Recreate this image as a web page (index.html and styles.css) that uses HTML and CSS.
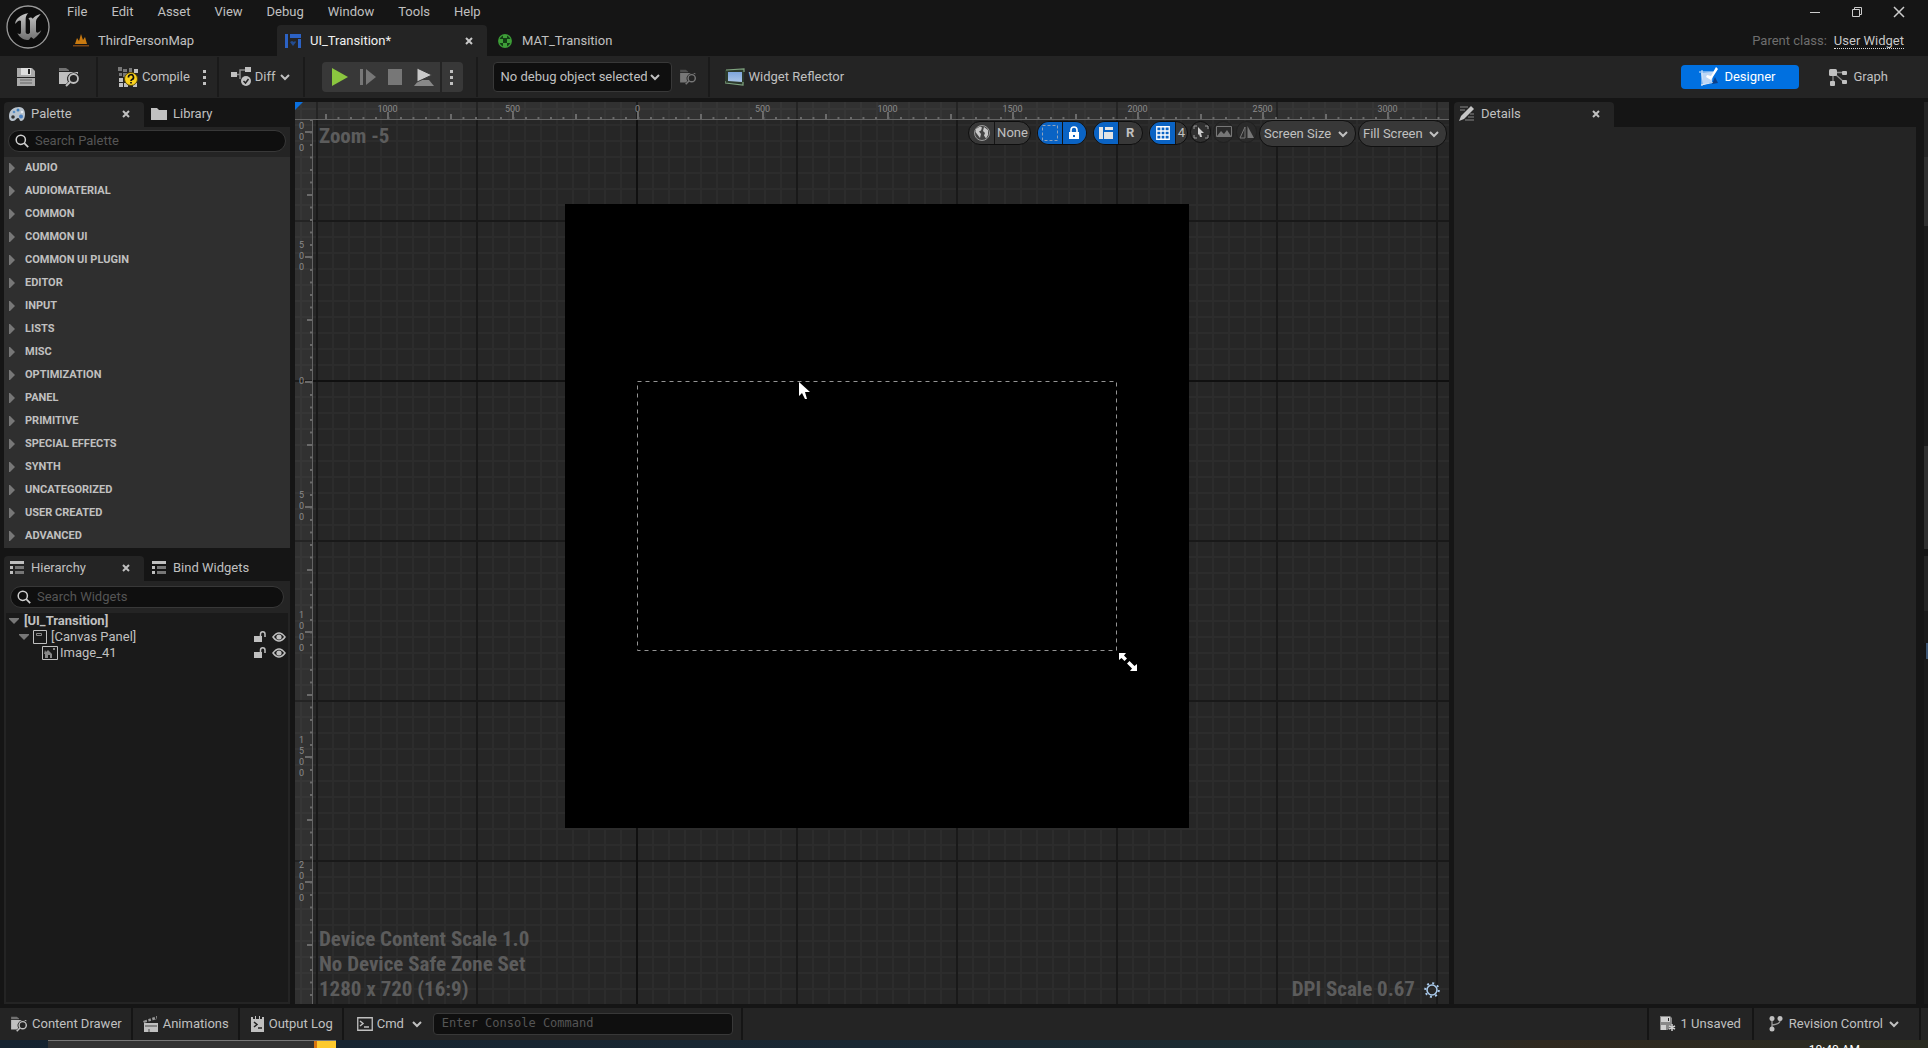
FILE: index.html
```html
<!DOCTYPE html>
<html lang="en">
<head>
<meta charset="utf-8">
<title>UI_Transition</title>
<link rel="stylesheet" href="styles.css">
</head>
<body>
<svg class="defs" aria-hidden="true">
  <defs>
    <linearGradient id="metal" x1="0" y1="0" x2="0" y2="1"><stop offset="0" stop-color="#c4c4c4"/><stop offset="1" stop-color="#6f6f6f"/></linearGradient>
    <linearGradient id="screen" x1="0" y1="0" x2="0" y2="1"><stop offset="0" stop-color="#7fa6dc"/><stop offset="1" stop-color="#a9c4e6"/></linearGradient>
  </defs>
  <symbol id="i-chevron" viewBox="0 0 10 8"><path d="M1 2l4 4 4-4" fill="none" stroke="currentColor" stroke-width="2"/></symbol>
  <symbol id="i-close" viewBox="0 0 8 8"><path d="M1 1l6 6M7 1L1 7" stroke="currentColor" stroke-width="2"/></symbol>
  <symbol id="i-search" viewBox="0 0 14 14"><circle cx="5.8" cy="5.8" r="4.6" fill="none" stroke="currentColor" stroke-width="1.5"/><path d="M9.2 9.2l4 4" stroke="currentColor" stroke-width="1.7"/></symbol>
  <symbol id="i-browse" viewBox="0 0 21 20"><path d="M0 1h7l3 2v1H0z" fill="currentColor" opacity=".5"/><path d="M0 5h19v2a6.500 6.500 0 0 0-10 8l-2 2H0z" fill="currentColor"/><circle cx="14.500" cy="11.500" r="4.500" fill="none" stroke="currentColor" stroke-width="1.800"/><path d="M11 15l-4 4" stroke="currentColor" stroke-width="2"/></symbol>
  <symbol id="i-dots" viewBox="0 0 4 16"><path d="M0 1h3v3H0zM0 7h3v3H0zM0 13h3v3H0z" fill="currentColor"/></symbol>
  <symbol id="i-list" viewBox="0 0 14 14"><path d="M0 0h14v3H0zM0 5h3v3H0zM0 10h3v3H0z" fill="currentColor"/><path d="M5 5h9v3H5zM5 10h9v3H5z" fill="#777"/></symbol>
  <symbol id="i-unlock" viewBox="0 0 12 11"><path d="M0 5h8v6H0z" fill="currentColor"/><path d="M6.500 5V3a2.200 2.200 0 0 1 4.500 0v3" fill="none" stroke="currentColor" stroke-width="1.500"/></symbol>
  <symbol id="i-eye" viewBox="0 0 14 10"><path d="M1 5Q7-3 13 5Q7 13 1 5z" fill="none" stroke="currentColor" stroke-width="1.500"/><circle cx="7" cy="5" r="2.600" fill="currentColor"/></symbol>
  <symbol id="i-right" viewBox="0 0 6 10"><path d="M0 0h1l5 5-5 5H0z" fill="currentColor"/></symbol>
  <symbol id="i-down" viewBox="0 0 10 6"><path d="M0 0h10v1L5 6 0 1z" fill="currentColor"/></symbol>
</svg>

<header class="titlebar">
  <svg class="logo" viewBox="0 0 132 132" aria-label="Unreal Engine"><circle cx="66" cy="66" r="63" fill="#0d0d0d" stroke="#9a9a9a" stroke-width="4"/><path transform="translate(-17 -17)" fill="url(#metal)" d="M84 42C60 45 43 62 45 74C50 66 60 60 62 66L62 98C62 106 57 105 51 102C60 118 76 125 86 121L92 113L100 119C112 110 119 102 123 92C115 101 108 103 107 96L107 66C107 58 115 52 121 44C112 46 101 52 97 58C94 53 88 54 84 58C88 60 89 62 89 68L89 100C84 107 76 104 76 98L76 60C76 52 79 46 84 42Z"/></svg>
  <div class="titlemain">
    <div class="menurow">
      <nav class="menu">
        <button>File</button><button>Edit</button><button>Asset</button><button>View</button><button>Debug</button><button>Window</button><button>Tools</button><button>Help</button>
      </nav>
      <div class="winctl">
        <button aria-label="Minimize"><svg width="12" height="12"><path d="M1 6.500h10" stroke="#ccc"/></svg></button>
        <button aria-label="Restore"><svg width="12" height="12"><path d="M1.500 3.500h7v7h-7zM3.500 3V1.500h7v7H9" fill="none" stroke="#ccc"/></svg></button>
        <button aria-label="Close"><svg width="12" height="12"><path d="M1 1l10 10M11 1L1 11" stroke="#ccc" stroke-width="1.500"/></svg></button>
      </div>
    </div>
    <div class="tabrow">
      <div class="doctab first"><svg width="16" height="14" viewBox="0 0 16 14"><path d="M2 10l2-6 2 3 2-7 2 6 2-3 2 7z" fill="#c97a10"/><path d="M0 11h16v1.500H0z" fill="#7a4515"/></svg><span>ThirdPersonMap</span></div>
      <div class="doctab active"><svg width="16" height="14" viewBox="0 0 16 14"><path d="M0 0h3v14H0zM5 0h11v4H5zM13 5h3v9h-3z" fill="#2c62c4"/><path d="M5 8l2-1 2 1 1-1 1 1-3 4z" fill="#234c90"/></svg><span>UI_Transition*</span><button aria-label="Close tab"><svg width="8" height="8"><use href="#i-close"/></svg></button></div>
      <div class="doctab wide"><svg width="16" height="14" viewBox="-1 0 16 14"><circle cx="7" cy="7" r="6.300" fill="#123c14" stroke="#3b9c36" stroke-width="1.300"/><path d="M5 1h4v3H5zM1 5h4v4H1zM9 5h4v4H9zM5 9h4v4H5z" fill="#3f9e38"/></svg><span>MAT_Transition</span></div>
      <div class="parent"><span>Parent class:</span><a href="#">User Widget</a></div>
    </div>
  </div>
</header>

<div class="toolbar">
  <div class="group files">
    <button aria-label="Save"><svg width="18" height="18" viewBox="0 0 18 18"><path d="M0 0h15l3 3v15H0z" fill="#aaa"/><path d="M4 0h10v7H4z" fill="#ddd"/><path d="M11 1h2v5h-2zM0 9h18v1H0z" fill="#222"/><path d="M3 12h12M3 15h12" stroke="#666"/></svg></button>
    <button aria-label="Browse"><svg width="21" height="20"><use href="#i-browse"/></svg></button>
  </div>
  <div class="group compile">
    <button class="label"><svg width="20" height="20" viewBox="0 0 20 20"><path d="M0 0h4v4H0zM5 2h4v3H5zM11 1h3v4h-3zM1 6h3v3H1zM5 6h5v4H5z" fill="#777"/><path d="M16 2h4v4h-4zM1 11h4v4H1zM1 16h4v4H1zM6 16h4v4H6zM15 16h4v4h-4z" fill="#c0c0c0"/><circle cx="13" cy="12" r="6.500" fill="#fbd21c" stroke="#5a4a08"/><path d="M10.500 10.500a2.500 2.500 0 1 1 3.500 2q-1 .5-1 1.500M13 15v1.500" fill="none" stroke="#111" stroke-width="1.700"/></svg>Compile</button>
    <button aria-label="Compile options"><svg width="4" height="16"><use href="#i-dots"/></svg></button>
  </div>
  <div class="group diff">
    <button class="label"><svg width="20" height="20" viewBox="0 0 20 20"><path d="M0 5h6v5H0zM14 0h6v5h-6z" fill="#c0c0c0"/><path d="M6 7.500h3V3h5M9 7v5" fill="none" stroke="#888" stroke-width="1.500"/><circle cx="15" cy="14" r="5" fill="#c0c0c0"/><path d="M12.500 14l2 2 3-4" fill="none" stroke="#222" stroke-width="1.500"/></svg>Diff<svg width="10" height="8"><use href="#i-chevron"/></svg></button>
  </div>
  <div class="group play">
    <div class="playbox">
      <button aria-label="Play"><svg width="18" height="18" viewBox="0 0 18 18"><path d="M1 0l16 9L1 18z" fill="#8bc63f"/></svg></button>
      <button aria-label="Skip"><svg width="16" height="18" viewBox="0 0 16 18"><path d="M0 1h3v16H0zM6 1l10 8-10 8z" fill="#777"/></svg></button>
      <button aria-label="Stop"><svg width="16" height="18" viewBox="0 0 16 18"><path d="M1 1h14v16H1z" fill="#777"/></svg></button>
      <button aria-label="Eject"><svg width="20" height="18" viewBox="0 0 20 18"><path d="M0 18l5-6h10l5 6z" fill="#888"/><path d="M3 0l15 7L3 14z" fill="#c8c8c8" stroke="#383838"/></svg></button>
      <button class="more" aria-label="Play options"><svg width="4" height="16"><use href="#i-dots"/></svg></button>
    </div>
  </div>
  <div class="group debug">
    <span class="drop dark"><select aria-label="Debug object"><option>No debug object selected</option></select><svg width="10" height="8"><use href="#i-chevron"/></svg></span>
    <button class="dim" aria-label="Find debug object"><svg width="17" height="16"><use href="#i-browse"/></svg></button>
  </div>
  <div class="group reflect">
    <button class="label"><svg width="20" height="18" viewBox="0 0 20 18"><path d="M0 2L19 1v15L0 15z" fill="#2c3a2c"/><path d="M3 4h14v10L3 13z" fill="url(#screen)"/><path d="M1 2l18-1v3M0 13v2l18 2v-3" fill="none" stroke="#7fa37f" stroke-width="1.200"/></svg>Widget Reflector</button>
  </div>
  <div class="modes">
    <button class="mode on"><svg width="20" height="20" viewBox="0 0 20 20"><path d="M2 6l12-1-1 10-9 3z" fill="#bcd6f5"/><path d="M0 5h16M3 3v16M2 18l14-3" stroke="#dce9fa" fill="none"/><path d="M17 0l2 2-7 11-5-3 1-2 4 1z" fill="#fff"/><path d="M16 10l3 6-6 1z" fill="#0a3f8a"/></svg>Designer</button>
    <button class="mode"><svg width="19" height="17" viewBox="0 0 19 17"><path d="M5 3.500h9M7 6l8 7M4 7v7" stroke="#888" stroke-width="1.300"/><rect width="8" height="7" rx="1.500" fill="#c0c0c0"/><rect x="13" y="2" width="5" height="4" rx="1" fill="#c0c0c0"/><rect x="13" y="11" width="5" height="4" rx="1" fill="#c0c0c0"/><rect x="1" y="12" width="5" height="5" rx="1" fill="#c0c0c0"/></svg>Graph</button>
  </div>
</div>

<main class="work">
  <aside class="left">
    <section class="palette">
      <div class="ptabs">
        <div class="ptab active"><svg width="16" height="14" viewBox="0 0 16 14"><path d="M0 9C0 3 5 0 10 0s6 4 6 7-1 7-4 7c-2 0-1-3-3-3s-2 3-5 3S0 12 0 9z" fill="#b9c3cd"/><circle cx="4" cy="10" r="1.800" fill="#333"/><circle cx="5" cy="5" r="1.300" fill="#5b8fc4"/><circle cx="9" cy="3" r="1.500" fill="#3c7fc0"/><circle cx="13" cy="5" r="1.300" fill="#e8eef5"/><circle cx="12" cy="9.500" r="2" fill="#4a7fc0"/></svg><span>Palette</span><button aria-label="Close Palette"><svg width="8" height="8"><use href="#i-close"/></svg></button></div>
        <div class="ptab"><svg width="16" height="12" viewBox="0 0 16 12"><path d="M0 0h6l2 2h8v10H0z" fill="#c0c0c0"/></svg><span>Library</span></div>
      </div>
      <label class="search"><svg width="14" height="14"><use href="#i-search"/></svg><input type="text" placeholder="Search Palette" aria-label="Search Palette"></label>
      <ul class="cats">
        <li><svg width="6" height="10"><use href="#i-right"/></svg>AUDIO</li>
        <li><svg width="6" height="10"><use href="#i-right"/></svg>AUDIOMATERIAL</li>
        <li><svg width="6" height="10"><use href="#i-right"/></svg>COMMON</li>
        <li><svg width="6" height="10"><use href="#i-right"/></svg>COMMON UI</li>
        <li><svg width="6" height="10"><use href="#i-right"/></svg>COMMON UI PLUGIN</li>
        <li><svg width="6" height="10"><use href="#i-right"/></svg>EDITOR</li>
        <li><svg width="6" height="10"><use href="#i-right"/></svg>INPUT</li>
        <li><svg width="6" height="10"><use href="#i-right"/></svg>LISTS</li>
        <li><svg width="6" height="10"><use href="#i-right"/></svg>MISC</li>
        <li><svg width="6" height="10"><use href="#i-right"/></svg>OPTIMIZATION</li>
        <li><svg width="6" height="10"><use href="#i-right"/></svg>PANEL</li>
        <li><svg width="6" height="10"><use href="#i-right"/></svg>PRIMITIVE</li>
        <li><svg width="6" height="10"><use href="#i-right"/></svg>SPECIAL EFFECTS</li>
        <li><svg width="6" height="10"><use href="#i-right"/></svg>SYNTH</li>
        <li><svg width="6" height="10"><use href="#i-right"/></svg>UNCATEGORIZED</li>
        <li><svg width="6" height="10"><use href="#i-right"/></svg>USER CREATED</li>
        <li><svg width="6" height="10"><use href="#i-right"/></svg>ADVANCED</li>
      </ul>
    </section>
    <section class="hierarchy">
      <div class="ptabs">
        <div class="ptab active"><svg width="16" height="14" viewBox="-1 0 16 14"><use href="#i-list" width="14" height="14"/></svg><span>Hierarchy</span><button aria-label="Close Hierarchy"><svg width="8" height="8"><use href="#i-close"/></svg></button></div>
        <div class="ptab"><svg width="16" height="14" viewBox="-1 0 16 14"><use href="#i-list" width="14" height="14"/></svg><span>Bind Widgets</span></div>
      </div>
      <label class="search inset"><svg width="14" height="14"><use href="#i-search"/></svg><input type="text" placeholder="Search Widgets" aria-label="Search Widgets"></label>
      <ul class="tree">
        <li class="root"><svg width="10" height="6"><use href="#i-down"/></svg><b>[UI_Transition]</b></li>
        <li class="child"><svg width="10" height="6"><use href="#i-down"/></svg><svg width="14" height="14"><path d="M.5.5h13v13H.5z" fill="none" stroke="#c0c0c0"/><path d="M3.500 3.500h5v2h-5z" fill="none" stroke="#888"/></svg><span>[Canvas Panel]</span><button aria-label="Lock"><svg width="12" height="11"><use href="#i-unlock"/></svg></button><button aria-label="Visibility"><svg width="14" height="10"><use href="#i-eye"/></svg></button></li>
        <li class="leaf"><svg width="16" height="14"><path d="M.5.5h15v13H.5z" fill="none" stroke="#c0c0c0"/><path d="M2 8l1-4 1 2 2-2 4 4v4H8V9H6v3H3V8zM11 2h2v2h-2z" fill="#888"/></svg><span>Image_41</span><button aria-label="Lock"><svg width="12" height="11"><use href="#i-unlock"/></svg></button><button aria-label="Visibility"><svg width="14" height="10"><use href="#i-eye"/></svg></button></li>
      </ul>
    </section>
  </aside>

  <section class="viewport">
    <div class="artboard"></div>
    <svg class="safe" width="480" height="270"><path d="M.5.5h479v269H.5z" fill="none" stroke="#949494" stroke-dasharray="4 4"/></svg>
    <svg class="pointer" width="12" height="18"><path d="M0 0v14l3-3 3 6h2L6 10h5z" fill="#fff"/></svg>
    <svg class="sizer" width="18" height="18"><path d="M0 0h7L5 2.500l3 3-2.500 2.500-3-3L0 7zM18 18h-7l2-2.500-5-5 2.500-2.500 5 5L18 11z" fill="#fff"/><path d="M6.500 10.500l4-4" stroke="#000"/></svg>

    <div class="ruler-top"><span>1000</span><span>500</span><span>0</span><span>500</span><span>1000</span><span>1500</span><span>2000</span><span>2500</span><span>3000</span></div>
    <div class="ruler-left"><span><br>0<br>0<br>0</span><span>5<br>0<br>0</span><span>0</span><span>5<br>0<br>0</span><span>1<br>0<br>0<br>0</span><span>1<br>5<br>0<br>0</span><span>2<br>0<br>0<br>0</span><span></span></div>
    <svg class="corner" width="8" height="8"><path d="M0 0h8L0 8z" fill="#0a70e0"/></svg>

    <div class="overlay">
      <div class="overtop">
        <div class="zoomtext">Zoom -5</div>
        <div class="pills">
          <div class="pill loc">
            <button aria-label="Localization"><svg width="16" height="16" viewBox="0 0 16 16"><circle cx="8" cy="8" r="7.500" fill="#444" stroke="#999"/><path d="M2 4l4-2.500 2 1-1 3-2 1 2 2.500-1 4-3-4-1.500-2zM10 2l4 3v5l-2 3.500-2-3 1-2.500-2-2z" fill="#c8c8c8"/></svg></button><button>None</button>
          </div>
          <div class="pill duo">
            <button class="on" aria-label="Dashed outlines"><svg width="16" height="16"><path d="M.5.5h15v15H.5z" fill="none" stroke="#8fa3bd" stroke-dasharray="3 2"/></svg></button><button class="on" aria-label="Respect locks"><svg width="12" height="14"><path d="M1 6h10v7H1z" fill="#fff"/><path d="M3 6V4a3 3 0 0 1 6 0v2" fill="none" stroke="#fff" stroke-width="1.600"/><path d="M5 9h2v2H5z" fill="#0a63c4"/></svg></button>
          </div>
          <div class="pill duo">
            <button class="on" aria-label="Layout"><svg width="16" height="14"><path d="M1 1h4v12H1zM7 1h8v3H7zM6 6h9v7H6z" fill="#e4e4e4"/></svg></button><button><b>R</b></button>
          </div>
          <div class="pill snap">
            <button class="on" aria-label="Grid snapping"><svg width="14" height="14"><path d="M.75.75h12.500v12.500H.75zM5 1v12M9 1v12M1 5h12M1 9h12" fill="none" stroke="#fff" stroke-width="1.300"/></svg></button><button>4</button>
          </div>
          <button class="dot" aria-label="Zoom to fit"><svg width="16" height="16"><path d="M1 5V2h3M12 2h3v3M15 11v3h-3M4 14H1v-3" fill="none" stroke="#999"/><path d="M5 3l6 6H8l1 4-2 0-1-3-1 1z" fill="#ccc"/></svg></button>
          <button class="dot faint" aria-label="Preview background"><svg width="16" height="12"><path d="M.5.500h15v10H.5z" fill="none" stroke="#777"/><path d="M1 10l4-5 3 3 3-4 4 6z" fill="#777"/></svg></button>
          <button class="dot faint" aria-label="Mirror"><svg width="16" height="14"><path d="M8.500 1v12H15z" fill="#777"/><path d="M6 2v11H1z" fill="none" stroke="#777"/></svg></button>
          <span class="drop round"><select aria-label="Screen size"><option>Screen Size</option></select><svg width="10" height="8"><use href="#i-chevron"/></svg></span>
          <span class="drop round"><select aria-label="Fill mode"><option>Fill Screen</option></select><svg width="10" height="8"><use href="#i-chevron"/></svg></span>
        </div>
      </div>
      <div class="overbottom">
        <div>Device Content Scale 1.0<br>No Device Safe Zone Set<br>1280 x 720 (16:9)</div>
        <div class="dpi">DPI Scale 0.67<button aria-label="DPI settings"><svg width="16" height="16"><circle cx="8" cy="8" r="5" fill="none" stroke="#a9c9ea" stroke-width="1.600"/><circle cx="8" cy="8" r="6.800" fill="none" stroke="#a9c9ea" stroke-width="2" stroke-dasharray="2 3.340"/></svg></button></div>
      </div>
    </div>
  </section>

  <aside class="details">
    <div class="ptabs">
      <div class="ptab active"><svg width="16" height="15" viewBox="0 0 16 15"><path d="M1 1h8M1 4h5M11 8h4M9 11h6M6 14h9" stroke="#666" stroke-width="1.300"/><path d="M12 0l3 3L5 13l-5 2 2-5z" fill="#c4c4c4"/></svg><span>Details</span><button aria-label="Close Details"><svg width="8" height="8"><use href="#i-close"/></svg></button></div>
    </div>
    <div class="empty"></div>
  </aside>
  <div class="behind"><i class="a"></i><i class="b"></i><i class="c"></i><i class="b d"></i><i class="a e"></i><i class="c f"></i><i class="g"></i><i class="c h"></i></div>
</main>

<footer class="status">
  <button class="s1"><svg width="17" height="16"><use href="#i-browse"/></svg>Content Drawer</button>
  <button class="s2"><svg width="16" height="16" viewBox="0 0 16 16"><path d="M1 7h14v9H1z" fill="#c0c0c0"/><path d="M2 10h12M6 13v3" stroke="#444"/><path d="M0 5l14-5v3L1 7z" fill="#999"/><path d="M4 2l1 4M8 1l1 4M12 0l1 3" stroke="#222" stroke-width="1.500"/></svg>Animations</button>
  <button class="s3"><svg width="13" height="16"><path d="M0 1h2v2h2V0h1v3h3V0h1v3h2V1h2v15H0z" fill="#c0c0c0"/><path d="M3 6l3 2.500L3 11M7 12h4" fill="none" stroke="#222" stroke-width="1.500"/></svg>Output Log</button>
  <div class="console">
    <svg width="16" height="14"><path d="M.75.75h14.500v12.500H.75z" fill="none" stroke="#c0c0c0" stroke-width="1.300"/><path d="M3 4l3 2.500L3 9M7 10h5" fill="none" stroke="#c0c0c0" stroke-width="1.500"/></svg>
    <span class="drop cmd"><select aria-label="Command type"><option>Cmd</option></select><svg width="10" height="8"><use href="#i-chevron"/></svg></span>
    <input type="text" placeholder="Enter Console Command" aria-label="Console command">
  </div>
  <div class="fill"></div>
  <button class="s4"><svg width="16" height="16"><path d="M0 0h10l2 2v6L8 14H0z" fill="#888"/><path d="M1 1h9v5H1zM1 9h5v5H1z" fill="#d0d0d0"/><path d="M8 2h1v3H8z" fill="#222"/><path d="M12 8v7M9 10l6 3M15 10l-6 3" stroke="#d0d0d0" stroke-width="1.500"/></svg>1 Unsaved</button>
  <button class="s5"><svg width="14" height="16"><path d="M3 3v10M11 3v2q0 3-8 4" fill="none" stroke="#999" stroke-width="1.300"/><circle cx="3" cy="2.500" r="2.500" fill="#c0c0c0"/><circle cx="11" cy="2.500" r="2.500" fill="#c0c0c0"/><circle cx="3" cy="13" r="2.500" fill="#c0c0c0"/></svg>Revision Control<svg width="10" height="8"><use href="#i-chevron"/></svg></button>
  <div class="gap"></div>
</footer>
<div class="desktop"><div class="thumb"><i></i></div><span class="clock">10:40 AM</span></div>
</body>
</html>
```
FILE: styles.css
```css
* { box-sizing: border-box; }
body {
  margin: 0; height: 100vh; display: flex; flex-direction: column; overflow: hidden;
  background: #151515; color: #c0c0c0; font: 13px/16px Roboto, sans-serif;
}
svg { display: block; flex: none; }
.defs { position: absolute; width: 0; height: 0; }
button { border: 0; padding: 0; background: none; color: inherit; font: inherit; display: flex; align-items: center; justify-content: center; white-space: nowrap; }
ul { list-style: none; margin: 0; padding: 0; }
input, select { font: inherit; color: inherit; border: 0; outline: 0; background: none; min-width: 0; }
input::placeholder { color: #555; opacity: 1; }

/* title bar */
.titlebar { display: flex; height: 56px; flex: none; }
.logo { width: 44px; height: 44px; margin: 5px 17px 0 6px; }
.titlemain { flex: 1; display: flex; flex-direction: column; }
.menurow { display: flex; justify-content: space-between; height: 25px; padding-bottom: 2px; }
.menu { display: flex; gap: 24px; }
.winctl { display: flex; gap: 30px; padding-right: 23px; }
.tabrow { display: flex; flex: 1; }
.doctab { width: 210px; display: flex; align-items: center; gap: 9px; padding: 0 14px 0 8px; border-radius: 4px 4px 0 0; }
.doctab.first { padding-left: 6px; }
.doctab.wide { padding-left: 10px; }
.doctab span { flex: 1; }
.doctab.active { background: #242424; color: #f0f0f0; }
.doctab button { color: #c8c8c8; }
.parent { margin-left: auto; display: flex; gap: 7px; align-items: center; padding-right: 24px; color: #6e6e6e; }
.parent a { color: #c8c8c8; text-decoration: none; border-bottom: 1px dotted #ddd; line-height: 15px; }

/* toolbar */
.toolbar { display: flex; height: 42px; flex: none; background: #242424; padding: 1px 0; }
.group { display: flex; align-items: center; border-right: 2px solid #1a1a1a; }
.label { gap: 4px; }
.files { padding: 0 16px 0 17px; gap: 24px; }
.compile { padding: 0 10px 0 20px; gap: 13px; }
.diff { padding: 0 13px 0 12px; }
.play { padding: 0 13px 0 17px; }
.playbox { display: flex; height: 30px; background: #383838; border-radius: 4px; padding-left: 9px; gap: 11px; }
.playbox .more { width: 23px; border-left: 2px solid #242424; margin-left: -5px; }
.debug { padding: 0 11px 0 15px; gap: 8px; }
.dim { color: #777; }
.reflect { padding-left: 15px; border: 0; }
.drop { display: flex; align-items: center; }
.drop select { appearance: none; height: 100%; padding: 0 24px 0 8px; }
.drop svg { margin-left: -21px; margin-right: 11px; pointer-events: none; }
.drop.dark { height: 30px; width: 179px; background: #0f0f0f; border: 1px solid #383838; border-radius: 4px; }
.drop.dark select { flex: 1; padding-left: 7px; }
.modes { margin-left: auto; display: flex; align-items: center; gap: 30px; padding-right: 40px; }
.mode { height: 24px; gap: 5px; }
.mode.on { width: 118px; padding-right: 6px; background: #0070e0; color: #fff; border-radius: 4px; }

/* work area */
.work { flex: 1; min-height: 0; display: flex; padding: 4px 0 4px 4px; }
.left { width: 286px; flex: none; display: flex; flex-direction: column; gap: 8px; margin-right: 5px; }
.ptabs { display: flex; height: 25px; flex: none; }
.ptab { width: 140px; display: flex; align-items: center; gap: 6px; padding: 0 14px 2px 5px; border-radius: 4px 4px 0 0; }
.ptab span { flex: 1; white-space: nowrap; }
.ptab.active { background: #242424; }
.ptab:not(.active) { padding-left: 7px; padding-right: 0; }
.search { display: flex; align-items: center; height: 30px; background: #242424; position: relative; padding: 0 4px 2px; }
.search svg { position: absolute; left: 11px; color: #d0d0d0; }
.search input { width: 100%; height: 22px; border: 1px solid #383838; border-radius: 11px; background: #0f0f0f; padding: 0 10px 2px 26px; }
.search.inset { height: 32px; padding: 0 6px; }
.search.inset svg { left: 13px; }
.cats { background: #2f2f2f; }
.cats li { height: 23px; display: flex; align-items: center; gap: 10px; padding: 0 0 1px 5px; font-size: 11px; font-weight: 700; }
.cats svg { color: #777; }
.hierarchy { flex: 1; display: flex; flex-direction: column; }
.tree { flex: 1; background: #1a1a1a; border: 2px solid #242424; border-top: 0; }
.tree li { height: 16px; display: flex; align-items: center; gap: 4px; padding-right: 2px; padding-bottom: 1px; }
.tree span { flex: 1; }
.tree button + button { margin-left: 2px; }
.tree > li > svg:first-child { color: #777; }
.root { padding-left: 3px; }
.root b { margin-left: 1px; }
.child { padding-left: 13px; }
.leaf { padding-left: 36px; }
.tree .leaf { gap: 2px; }
.tree .leaf button + button { margin-left: 4px; }

/* design canvas: 16px cells, a heavy line every ten */
.viewport {
  flex: 1; min-width: 0; position: relative; overflow: hidden; background-color: #262626;
  background-image:
    linear-gradient(#101010, #101010), linear-gradient(#101010, #101010),
    linear-gradient(90deg, #191919 2px, transparent 2px), linear-gradient(#191919 2px, transparent 2px),
    linear-gradient(90deg, #2c2c2c 2px, transparent 2px), linear-gradient(#2c2c2c 2px, transparent 2px);
  background-size: 2px 100%, 100% 2px, 160px 160px, 160px 160px, 16px 16px, 16px 16px;
  background-position: 341px 0, 0 278px, 21px 118px, 21px 118px, 5px 6px, 5px 6px;
  background-repeat: no-repeat, no-repeat, repeat, repeat, repeat, repeat;
}
.artboard { position: absolute; left: 270px; top: 102px; width: 624px; height: 624px; background: #000; }
.safe { position: absolute; left: 342px; top: 279px; }
.pointer { position: absolute; left: 504px; top: 280px; }
.sizer { position: absolute; left: 824px; top: 551px; }
.ruler-top, .ruler-left { position: absolute; left: 0; top: 0; display: flex; color: #8a8a8a; font-size: 9px; line-height: 11px; overflow: hidden; }
.ruler-top { right: 0; height: 18px; padding-left: 30px; border-bottom: 1px solid #646464; background: #ffffff0d; }
.ruler-left { top: 18px; bottom: 0; width: 18px; flex-direction: column; border-right: 1px solid #646464; background: #ffffff0d; }
.ruler-top span {
  flex: none; width: 125px; text-align: center; padding-top: 2px;
  background:
    linear-gradient(#6a6a6a, #6a6a6a) center bottom / 2px 7px no-repeat,
    linear-gradient(#6a6a6a, #6a6a6a) left bottom / 2px 5px no-repeat,
    linear-gradient(90deg, #6a6a6a 2px, transparent 2px) left bottom / 10% 2px repeat-x;
}
.ruler-left span {
  flex: none; height: 125px; display: flex; align-items: center; padding-left: 4px;
  background:
    linear-gradient(#6a6a6a, #6a6a6a) right center / 7px 2px no-repeat,
    linear-gradient(#6a6a6a, #6a6a6a) right top / 5px 2px no-repeat,
    linear-gradient(#6a6a6a 2px, transparent 2px) right top / 2px 10% repeat-y;
}
.ruler-left span:first-child { margin-top: -51px; }
.corner { position: absolute; left: 0; top: 0; }
.overlay { position: absolute; inset: 18px 2px 0 24px; display: flex; flex-direction: column; justify-content: space-between; }
.overtop, .overbottom { display: flex; justify-content: space-between; align-items: flex-start; }
.zoomtext, .overbottom { font: 700 21px/25px "Roboto Condensed", "Liberation Sans Narrow", Roboto, sans-serif; color: #5c5c5c; }
.zoomtext { padding-top: 4px; }
.overbottom { align-items: flex-end; padding-bottom: 2px; }
.dpi { display: flex; gap: 9px; align-items: center; padding-right: 7px; }
.pills { display: flex; align-items: flex-start; gap: 2px; }
.pill, .dot { margin-top: 1px; }
.pill { display: flex; height: 24px; border: 1px solid #0e0e0e; border-radius: 12px; background: #383838; overflow: hidden; margin-right: 4px; }
.pill button { flex: 1; }
.pill button + button { border-left: 1px solid #151515; }
.pill .on { background: #0a63c4; }
.loc { width: 63px; }
.pill.loc button:first-child { flex: 0 0 25px; }
.duo { width: 50px; }
.snap { width: 39px; margin-right: 0; }
.pill.snap .on { flex: 0 0 25px; }
.dot { width: 21px; height: 22px; border-radius: 11px; border: 1px solid #101010; background: #303030; }
.dot.faint { background: #2a2a2a; border-color: #202020; }
.drop.round { height: 27px; border: 1px solid #101010; border-radius: 13px; background: #383838; }
.drop.round select { padding: 0 26px 0 4px; }
.drop.round svg { margin-left: -20px; margin-right: 7px; }

/* details and the window behind */
.details { width: 462px; flex: none; margin-left: 5px; display: flex; flex-direction: column; }
.details .ptab { width: 160px; }
.empty { flex: 1; background: #242424; }
.behind { width: 4px; flex: none; margin-left: 8px; display: flex; flex-direction: column; }
.a { height: 55px; background: #242424; }
.b { height: 69px; background: #2f2f2f; }
.c { height: 220px; background: #1a1a1a; }
.b.d { height: 103px; margin-bottom: 7px; }
.c.f { height: 32px; }
.g { height: 16px; margin-left: 2px; background: #3b5370; }
.c.h { flex: 1; height: auto; }

/* status bar */
.status { display: flex; height: 32px; flex: none; background: #242424; }
.status > button { border-right: 2px solid #151515; }
.s1 { padding: 0 9px 0 11px; gap: 4px; }
.s2 { padding: 0 9px 0 10px; gap: 4px; }
.s3 { padding: 0 9px 0 11px; gap: 5px; }
.console { display: flex; align-items: center; padding: 0 8px 0 13px; border-right: 2px solid #151515; }
.drop.cmd select { padding: 0 28px 0 4px; }
.console input { width: 300px; height: 22px; background: #0f0f0f; border: 1px solid #383838; border-radius: 4px; padding: 0 8px 2px; font: 12px/16px "DejaVu Sans Mono", monospace; }
.fill { flex: 1; border-right: 2px solid #151515; }
.s4 { padding: 0 11px; gap: 5px; }
.s5 { padding: 0 20px 0 15px; gap: 6px; }
.gap { width: 7px; }
.desktop { height: 8px; flex: none; display: flex; justify-content: space-between; overflow: hidden; padding: 0 68px 0 48px; background: linear-gradient(90deg, #152330, #1a2833 45%, #1d2c30 70%, #30291f 80%, #2a2c22); }
.thumb { width: 288px; background: #333; border-top: 1px solid #777; display: flex; justify-content: flex-end; }
.thumb i { width: 22px; background: #fdc92c; border-left: 3px solid #d9740f; }
.clock { font-size: 12px; color: #fff; padding-top: 2px; }
```
